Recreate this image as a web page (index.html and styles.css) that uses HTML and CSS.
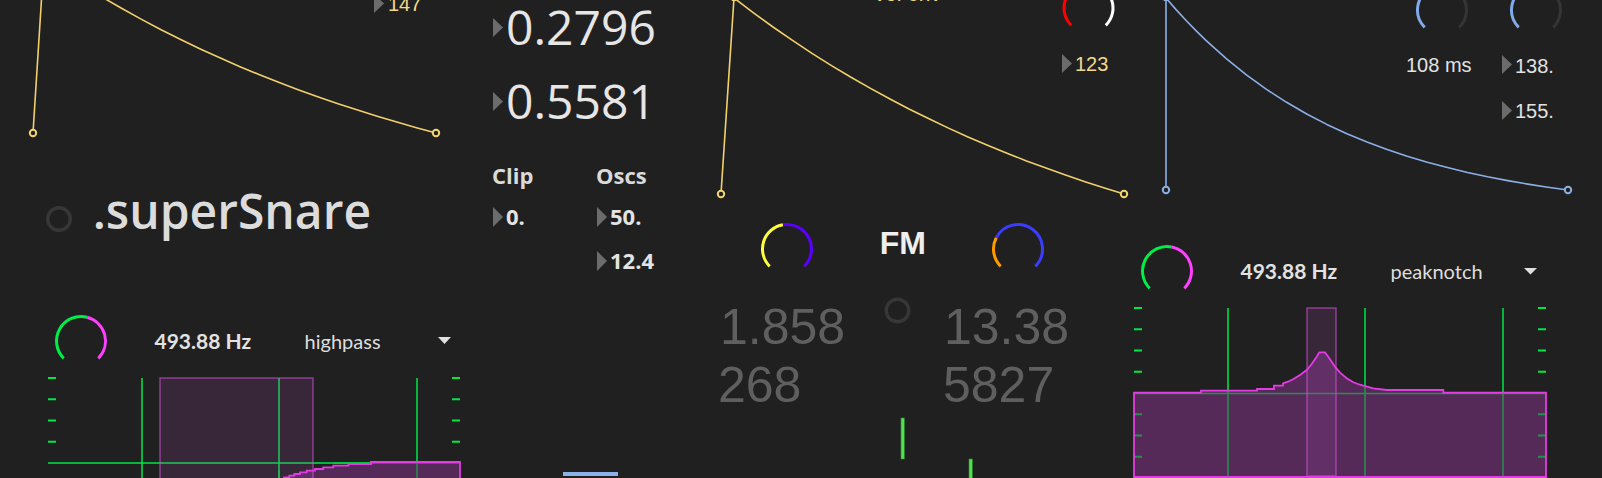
FILE: index.html
```html
<!DOCTYPE html>
<html>
<head>
<meta charset="utf-8">
<title>superSnare</title>
<link rel="stylesheet" href="styles.css">
</head>
<body>
<div class="patcher">
  <svg class="canvas" width="1602" height="478" viewBox="0 0 1602 478" xmlns="http://www.w3.org/2000/svg">
    <!-- left amp envelope -->
    <polyline class="env env-yellow" points="33,133 44,-40 63.6,-26.9 83.2,-14.4 102.8,-2.5 122.4,8.8 142,19.6 161.6,30 181.2,39.8 200.8,49.2 220.4,58.1 240,66.7 259.6,74.8 279.2,82.6 298.8,90 318.4,97 338,103.7 357.6,110.1 377.2,116.3 396.8,122.1 416.4,127.7 436,133"/>
    <circle class="pt pt-yellow" cx="33" cy="133" r="3.2"/>
    <circle class="pt pt-yellow" cx="436" cy="133" r="3.2"/>

    <!-- middle vol envelope -->
    <polyline class="env env-yellow" points="721,194 734,-2 753.5,12.8 773,27 792.5,40.4 812,53.3 831.5,65.6 851,77.3 870.5,88.4 890,99 909.5,109.2 929,118.8 948.5,128.1 968,136.9 987.5,145.2 1007,153.2 1026.5,160.9 1046,168.1 1065.5,175 1085,181.7 1104.5,188 1124,194"/>
    <circle class="pt pt-yellow" cx="721" cy="194" r="3.2"/>
    <circle class="pt pt-yellow" cx="734" cy="-3" r="3.2"/>
    <circle class="pt pt-yellow" cx="1124" cy="194" r="3.2"/>

    <!-- right blue envelope -->
    <polyline class="env env-blue" points="1166,190 1166,-2 1176.1,9.6 1186.1,20.5 1196.2,30.9 1206.2,40.6 1226.3,58.7 1246.4,74.9 1266.5,89.4 1286.6,102.3 1306.7,114 1326.8,124.4 1346.9,133.7 1367,142 1387.1,149.5 1407.2,156.2 1427.3,162.3 1447.4,167.6 1467.5,172.5 1487.6,176.8 1507.7,180.6 1527.8,184.1 1547.9,187.2 1568,190"/>
    <circle class="pt pt-blue" cx="1166" cy="190" r="3.2"/>
    <circle class="pt pt-blue" cx="1166" cy="-3" r="3.2"/>
    <circle class="pt pt-blue" cx="1568" cy="190" r="3.2"/>

    <!-- dials -->
    <path class="arc arc-green" d="M63.68,358.32 A24.5,24.5 0 0 1 86.93,317.23"/>
    <path class="arc arc-magenta" d="M86.93,317.23 A24.5,24.5 0 0 1 98.32,358.32"/>

    <path class="arc arc-green" d="M1149.68,288.32 A24.5,24.5 0 0 1 1171.67,246.95"/>
    <path class="arc arc-magenta" d="M1171.67,246.95 A24.5,24.5 0 0 1 1184.32,288.32"/>

    <path class="arc arc-lemon" d="M769.68,266.32 A24.5,24.5 0 0 1 782.96,224.84"/>
    <path class="arc arc-violet" d="M782.96,224.84 A24.5,24.5 0 0 1 804.32,266.32"/>

    <path class="arc arc-orange" d="M1000.68,266.32 A24.5,24.5 0 0 1 996.27,237.69"/>
    <path class="arc arc-royal" d="M996.27,237.69 A24.5,24.5 0 1 1 1035.32,266.32"/>

    <path class="arc arc-red" d="M1071.18,25.32 A24.5,24.5 0 0 1 1088.5,-16.5"/>
    <path class="arc arc-white" d="M1088.5,-16.5 A24.5,24.5 0 0 1 1105.82,25.32"/>

    <path class="arc arc-sky" d="M1424.68,27.32 A24.5,24.5 0 0 1 1431.65,-12.2"/>
    <path class="arc arc-off" d="M1431.65,-12.2 A24.5,24.5 0 0 1 1459.32,27.32"/>
    <path class="arc arc-sky" d="M1518.68,27.32 A24.5,24.5 0 0 1 1525.65,-12.2"/>
    <path class="arc arc-off" d="M1525.65,-12.2 A24.5,24.5 0 0 1 1553.32,27.32"/>

    <!-- toggles -->
    <circle class="toggle" cx="59" cy="219" r="11.3"/>
    <circle class="toggle" cx="897.5" cy="310.5" r="11.3"/>

    <!-- dropdown arrows -->
    <polygon class="drop" points="438,337 451,337 444.5,344"/>
    <polygon class="drop" points="1524,268 1537,268 1530.5,274.5"/>

    <!-- left filtergraph -->
    <g class="grid">
      <path d="M48,378h8M48,399.25h8M48,420.5h8M48,441.75h8M452,378h8M452,399.25h8M452,420.5h8M452,441.75h8"/>
      <path class="gline" d="M142,378V480M279,378V480M417,378V480M48,463H460"/>
    </g>
    <polygon class="resp-fill" points="284,480 284,477.3 289.3,477.3 289.3,475.7 294.3,475.7 294.3,474 300,474 300,472.3 306.7,472.3 306.7,470.7 315,470.7 315,469 323.3,469 323.3,467.3 333.3,467.3 333.3,465.7 348.3,465.7 348.3,464 371,464 371,462 460,462 460,480"/>
    <g class="grid grid-dim">
      <path class="gline" d="M417,462V480M279,470V480M371,463H460M333,463H371"/>
    </g>
    <rect class="bw" x="160" y="378" width="153" height="110"/>
    <polyline class="resp-line" points="284,480 284,477.3 289.3,477.3 289.3,475.7 294.3,475.7 294.3,474 300,474 300,472.3 306.7,472.3 306.7,470.7 315,470.7 315,469 323.3,469 323.3,467.3 333.3,467.3 333.3,465.7 348.3,465.7 348.3,464 371,464 371,462 460,462 460,480"/>

    <!-- right filtergraph -->
    <g class="grid">
      <path d="M1134,308h8M1134,329.25h8M1134,350.5h8M1134,371.75h8M1538,308h8M1538,329.25h8M1538,350.5h8M1538,371.75h8"/>
      <path class="gline" d="M1228,308V477M1365,308V477M1503,308V477"/>
    </g>
    <polygon class="resp-fill" points="1134,477 1134,392.7 1201,392.7 1201,390.7 1257,390.7 1257,389 1274,389 1274,385.7 1283,385.7 1283,383.3 1288,381.7 1293,379.3 1300,375 1306.7,370 1311.7,364 1316.7,356.7 1319.3,352.3 1325,352.3 1328.3,356.7 1335,366.7 1340,372.7 1346.7,378.3 1353.3,382.3 1358,384 1363.3,385.7 1373.3,388.3 1386.7,390 1443.3,390 1443.3,392.7 1546,392.7 1546,477"/>
    <g class="grid grid-dim">
      <path d="M1134,414.25h8M1134,435.5h8M1134,456.75h8M1538,414.25h8M1538,435.5h8M1538,456.75h8"/>
      <path class="gline" d="M1228,390V477M1365,385V477M1503,392V477M1134,393.5H1546"/>
    </g>
    <rect class="bw" x="1307" y="308" width="29" height="168"/>
    <polygon class="resp-line" points="1134,477 1134,392.7 1201,392.7 1201,390.7 1257,390.7 1257,389 1274,389 1274,385.7 1283,385.7 1283,383.3 1288,381.7 1293,379.3 1300,375 1306.7,370 1311.7,364 1316.7,356.7 1319.3,352.3 1325,352.3 1328.3,356.7 1335,366.7 1340,372.7 1346.7,378.3 1353.3,382.3 1358,384 1363.3,385.7 1373.3,388.3 1386.7,390 1443.3,390 1443.3,392.7 1546,392.7 1546,477"/>

    <!-- meters / sliders at bottom -->
    <rect class="bar-blue" x="563" y="472" width="55" height="4"/>
    <rect class="bar-green" x="901" y="418" width="3.3" height="41"/>
    <rect class="bar-green" x="969" y="459" width="3.3" height="22"/>
  </svg>

  <!-- number boxes -->
  <div class="nbox nb-small nb-147 yel"><span class="tri"></span><span class="num">147</span></div>
  <div class="nbox nb-small nb-123 yel"><span class="tri"></span><span class="num">123</span></div>
  <div class="nbox nb-small nb-138"><span class="tri"></span><span class="num">138.</span></div>
  <div class="nbox nb-small nb-155"><span class="tri"></span><span class="num">155.</span></div>

  <div class="nbox nb-big nb-a"><span class="tri"></span><span class="num">0.2796</span></div>
  <div class="nbox nb-big nb-b"><span class="tri"></span><span class="num">0.5581</span></div>

  <div class="nbox nb-mid nb-clip"><span class="tri"></span><span class="num">0.</span></div>
  <div class="nbox nb-mid nb-osc1"><span class="tri"></span><span class="num">50.</span></div>
  <div class="nbox nb-mid nb-osc2"><span class="tri"></span><span class="num">12.4</span></div>

  <!-- labels -->
  <div class="t lab-vol">vol env</div>
  <div class="t lab-ms">108 ms</div>
  <div class="t lab-clip">Clip</div>
  <div class="t lab-oscs">Oscs</div>
  <div class="t title">.superSnare</div>
  <div class="t hz hz-left">493.88 Hz</div>
  <div class="t menu menu-left">highpass</div>
  <div class="t hz hz-right">493.88 Hz</div>
  <div class="t menu menu-right">peaknotch</div>
  <div class="t fm">FM</div>
  <div class="t fmnum fm-a">1.858</div>
  <div class="t fmnum fm-b">268</div>
  <div class="t fmnum fm-c">13.38</div>
  <div class="t fmnum fm-d">5827</div>
</div>
</body>
</html>
```

FILE: styles.css
```css
html, body {
  margin: 0;
  padding: 0;
  background: #202020;
}

.patcher {
  position: relative;
  width: 1602px;
  height: 478px;
  overflow: hidden;
  background: #202020;
}

.canvas {
  position: absolute;
  left: 0;
  top: 0;
  display: block;
}

/* ---------- svg graphics ---------- */
.env {
  fill: none;
  stroke-width: 1.6;
  stroke-linejoin: round;
}
.env-yellow { stroke: #f1d06c; }
.env-blue { stroke: #8cafe6; }

.pt {
  fill: #202020;
  stroke-width: 2;
}
.pt-yellow { stroke: #f4d46e; }
.pt-blue { stroke: #8cafe6; }

.arc {
  fill: none;
  stroke-width: 3;
  stroke-linecap: butt;
}
.arc-green { stroke: #00ee48; }
.arc-magenta { stroke: #ff40ff; }
.arc-lemon { stroke: #ffff3a; }
.arc-violet { stroke: #5a00ff; }
.arc-orange { stroke: #ff9a00; }
.arc-royal { stroke: #3c3cff; }
.arc-red { stroke: #ff0000; }
.arc-white { stroke: #ffffff; }
.arc-sky { stroke: #82a9e8; }
.arc-off { stroke: #353535; }

.toggle {
  fill: none;
  stroke: #373737;
  stroke-width: 3.4;
}

.drop { fill: #e0e0e0; }

.grid path {
  fill: none;
  stroke: #00e646;
  stroke-width: 2;
}
.grid path.gline { stroke-width: 1.5; }
.grid-dim { opacity: 0.55; }

.resp-fill {
  fill: #562a58;
  stroke: none;
}
.resp-line {
  fill: none;
  stroke: #e43ce4;
  stroke-width: 1.8;
}
.bw {
  fill: rgba(160, 70, 170, 0.18);
  stroke: rgba(210, 80, 215, 0.6);
  stroke-width: 1.5;
}

.bar-blue { fill: #8cb0e8; }
.bar-green { fill: #52e052; stroke: #2f8f2f; stroke-width: 0.6; }

/* ---------- text ---------- */
.t {
  position: absolute;
  line-height: 1;
  white-space: nowrap;
}

.nbox {
  position: absolute;
  display: flex;
  align-items: flex-start;
  gap: 3px;
  line-height: 1;
  white-space: nowrap;
}
.tri {
  flex: none;
  width: 10px;
  height: 19px;
  background: #6c6c6c;
  clip-path: polygon(0 0, 100% 50%, 0 100%);
}

.nb-small {
  font-family: "Liberation Sans", Arial, sans-serif;
  font-size: 20px;
  color: #e2e2e2;
}
.nb-small.yel { color: #f2d98c; }
.nb-147 { left: 374px; top: -6px; gap: 4px; }
.nb-123 { left: 1062px; top: 54px; }
.nb-138 { left: 1502px; top: 56px; }
.nb-138 .tri { margin-top: -1px; }
.nb-155 { left: 1502px; top: 101px; }

.nb-big {
  font-family: "Open Sans", Lato, sans-serif;
  font-size: 48px;
  color: #e6e6e6;
}
.nb-big .tri { margin-top: 14.6px; }
.nb-a { left: 493px; top: 3.4px; }
.nb-b { left: 493px; top: 77.4px; }

.nb-mid {
  font-family: "Open Sans", Lato, sans-serif;
  font-weight: 700;
  font-size: 22px;
  color: #e4e4e4;
}
.nb-mid .tri { margin-top: 2.5px; height: 20px; }
.nb-clip { left: 493px; top: 204.5px; }
.nb-osc1 { left: 597px; top: 204.5px; }
.nb-osc2 { left: 597px; top: 248.5px; }

.lab-vol {
  left: 874.5px;
  top: -16.8px;
  font-family: "Liberation Sans", Arial, sans-serif;
  font-size: 21px;
  color: #f2d98c;
}
.lab-ms {
  left: 1406px;
  top: 55px;
  font-family: "Liberation Sans", Arial, sans-serif;
  font-size: 20px;
  color: #e2e2e2;
}

.lab-clip, .lab-oscs {
  top: 163.5px;
  font-family: "Open Sans", Lato, sans-serif;
  font-weight: 700;
  font-size: 22px;
  color: #dadada;
}
.lab-clip { left: 492px; }
.lab-oscs { left: 596px; }

.title {
  left: 92.7px;
  top: 187.4px;
  font-family: "Open Sans", Lato, sans-serif;
  font-weight: 600;
  font-size: 48px;
  color: #dcdcdc;
}

.hz {
  font-family: Lato, "Open Sans", sans-serif;
  font-weight: 700;
  font-size: 21px;
  color: #e2e2e2;
}
.hz-left { left: 154.5px; top: 329.9px; }
.hz-right { left: 1240.5px; top: 260.4px; }

.menu {
  font-family: Lato, "Open Sans", sans-serif;
  font-size: 20px;
  color: #dedede;
}
.menu-left { left: 304.6px; top: 330.8px; }
.menu-right { left: 1390.6px; top: 261.3px; }

.fm {
  left: 879.7px;
  top: 226.9px;
  font-family: "Liberation Sans", Arial, sans-serif;
  font-weight: 700;
  font-size: 32px;
  color: #efefef;
}

.fmnum {
  font-family: "Liberation Sans", Arial, sans-serif;
  font-size: 50px;
  color: #5f5f5f;
}
.fm-a { left: 720px; top: 301.7px; }
.fm-b { left: 718px; top: 359.7px; }
.fm-c { left: 944px; top: 301.7px; }
.fm-d { left: 943px; top: 359.7px; }
```
